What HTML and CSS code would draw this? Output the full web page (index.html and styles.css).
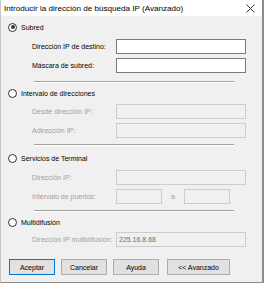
FILE: index.html
```html
<!DOCTYPE html>
<html lang="es">
<head>
<meta charset="utf-8">
<link rel="stylesheet" href="styles.css">
</head>
<body>
<div class="window">
  <div class="titlebar">
    <span class="title">Introducir la dirección de búsqueda IP (Avanzado)</span>
    <svg class="close" width="9" height="9" viewBox="0 0 9 9"><path d="M0.5 0.5L8.5 8.5M8.5 0.5L0.5 8.5" stroke="#333" stroke-width="1"/></svg>
  </div>
  <div class="content">
    <div class="section s1">
      <div class="radio-row"><span class="radio checked"></span><span>Subred</span></div>
      <div class="field"><span class="label">Dirección IP de destino:</span><span class="input"></span></div>
      <div class="field"><span class="label">Máscara de subred:</span><span class="input"></span></div>
    </div>
    <div class="sep"></div>
    <div class="section s2">
      <div class="radio-row"><span class="radio"></span><span>Intervalo de direcciones</span></div>
      <div class="field disabled"><span class="label">Desde dirección IP:</span><span class="input"></span></div>
      <div class="field disabled"><span class="label">Adirección IP:</span><span class="input"></span></div>
    </div>
    <div class="sep"></div>
    <div class="section s3">
      <div class="radio-row"><span class="radio"></span><span>Servicios de Terminal</span></div>
      <div class="field disabled"><span class="label">Dirección IP:</span><span class="input"></span></div>
      <div class="field disabled"><span class="label">Intervalo de puertos:</span><span class="input port"></span><span class="to">a</span><span class="input port"></span></div>
    </div>
    <div class="sep"></div>
    <div class="section s4">
      <div class="radio-row"><span class="radio"></span><span>Multidifusión</span></div>
      <div class="field disabled"><span class="label">Dirección IP multidifusión:</span><span class="input value">225.16.8.68</span></div>
    </div>
    <div class="buttons">
      <span class="btn default">Aceptar</span>
      <span class="btn">Cancelar</span>
      <span class="btn">Ayuda</span>
      <span class="btn wide">&lt;&lt; Avanzado</span>
    </div>
  </div>
</div>
</body>
</html>
```
FILE: styles.css
```css
html, body { margin: 0; padding: 0; }
body {
  width: 264px;
  height: 283px;
  background: #f0f0f0;
  font-family: "Liberation Sans", Arial, sans-serif;
  font-size: 7px;
  color: #000;
  white-space: nowrap;
}
.window {
  box-sizing: border-box;
  width: 264px;
  height: 283px;
  background: #f0f0f0;
  border-left: 1px solid #c8c8c8;
  border-right: 2px solid #8c8c8c;
  border-bottom: 1px solid #8c8c8c;
  display: flex;
  flex-direction: column;
}
.titlebar {
  height: 16px;
  background: #fff;
  display: flex;
  align-items: center;
  justify-content: space-between;
  padding: 0 7px 0 3px;
  font-size: 8.1px;
}
.close { display: block; }
.content {
  padding: 6px 0 0 7px;
  display: flex;
  flex-direction: column;
}
.radio-row {
  height: 10px;
  display: flex;
  align-items: center;
  gap: 4px;
}
.radio {
  box-sizing: border-box;
  width: 9px;
  height: 9px;
  border: 1px solid #333;
  border-radius: 50%;
  background: #fff;
  position: relative;
}
.radio.checked::after {
  content: "";
  position: absolute;
  left: 1.5px;
  top: 1.5px;
  width: 4px;
  height: 4px;
  border-radius: 50%;
  background: #333;
}
.section { display: flex; flex-direction: column; }
.field {
  display: flex;
  align-items: center;
  height: 15px;
  padding-left: 24px;
}
.s1 .field, .s2 .field, .s3 .field { margin-top: 4px; }
.s1 .radio-row + .field { margin-top: 7px; }
.s2 .radio-row + .field { margin-top: 6px; }
.s3 .radio-row + .field { margin-top: 7px; }
.s4 .radio-row + .field { margin-top: 5px; }
.label { width: 84px; flex: none; }
.input {
  box-sizing: border-box;
  width: 130px;
  height: 15px;
  border: 1px solid #7a7a7a;
  background: #fff;
  flex: none;
}
.disabled .label { color: #a0a0a0; }
.disabled .input { border-color: #cccccc; background: #f0f0f0; }
.input.port { width: 46px; }
.to { width: 22px; text-align: center; color: #a0a0a0; }
.input.value {
  color: #6d6d6d;
  padding-left: 2px;
  display: flex;
  align-items: center;
}
.sep {
  width: 200px;
  height: 1px;
  margin-left: 26px;
  background: #a0a0a0;
  border-bottom: 1px solid #fff;
}
.s1 + .sep { margin-top: 8px; margin-bottom: 5px; }
.s2 + .sep { margin-top: 6px; margin-bottom: 7px; }
.s3 + .sep { margin-top: 6px; margin-bottom: 5px; }
.buttons {
  margin-top: 12px;
  display: flex;
  gap: 6px;
  padding-left: 1px;
}
.btn {
  box-sizing: border-box;
  width: 46px;
  height: 16px;
  border: 1px solid #adadad;
  background: #e1e1e1;
  display: flex;
  align-items: center;
  justify-content: center;
}
.btn.default { border: 1px solid #0078d7; }
.btn.wide { width: 63px; margin-left: 2px; }
```
